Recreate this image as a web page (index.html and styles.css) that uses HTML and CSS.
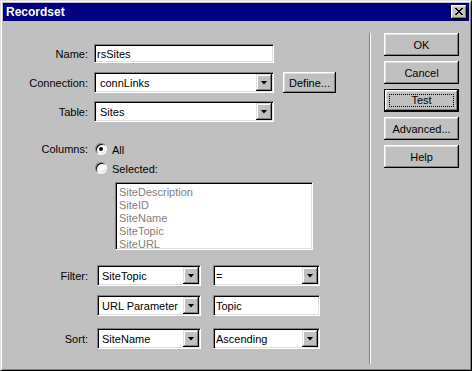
FILE: index.html
```html
<!DOCTYPE html>
<html lang="en">
<head>
    <meta charset="UTF-8">
    <title>Recordset</title>
    <link rel="stylesheet" href="styles.css">
</head>
<body>

    <div class="window">
        <div class="titlebar">
            <span class="title">Recordset</span>
            <button class="close-btn" type="button">
                <svg width="8" height="7" viewBox="0 0 8 7" shape-rendering="crispEdges">
                    <path d="M0 0h2v1h-2zM6 0h2v1h-2zM1 1h2v1h-2zM5 1h2v1h-2zM2 2h4v1h-4zM3 3h2v1h-2zM2 4h4v1h-4zM1 5h2v1h-2zM5 5h2v1h-2zM0 6h2v1h-2zM6 6h2v1h-2z" fill="#000"/>
                </svg>
            </button>
        </div>

        <div class="dialog">
            <div class="form-panel">
                <div class="row row-name">
                    <label class="field-label" for="rsName">Name:</label>
                    <input class="text-field name-field" id="rsName" type="text" value="rsSites">
                </div>

                <div class="row row-conn">
                    <span class="field-label">Connection:</span>
                    <div class="combo combo-wide"><span class="combo-value">connLinks</span><span class="combo-arrow"><i></i></span></div>
                    <button class="btn define-btn" type="button">Define...</button>
                </div>

                <div class="row row-table">
                    <span class="field-label">Table:</span>
                    <div class="combo combo-wide"><span class="combo-value">Sites</span><span class="combo-arrow"><i></i></span></div>
                </div>

                <div class="row row-radio-all">
                    <span class="field-label">Columns:</span>
                    <span class="radio checked"></span>
                    <span class="radio-text">All</span>
                </div>

                <div class="row row-radio-sel">
                    <span class="field-label"></span>
                    <span class="radio"></span>
                    <span class="radio-text">Selected:</span>
                </div>

                <div class="row row-list">
                    <span class="field-label"></span>
                    <div class="listbox">
                        <div class="list-item">SiteDescription</div>
                        <div class="list-item">SiteID</div>
                        <div class="list-item">SiteName</div>
                        <div class="list-item">SiteTopic</div>
                        <div class="list-item">SiteURL</div>
                    </div>
                </div>

                <div class="row row-filter">
                    <span class="field-label">Filter:</span>
                    <div class="combo combo-left"><span class="combo-value">SiteTopic</span><span class="combo-arrow"><i></i></span></div>
                    <div class="combo combo-right"><span class="combo-value">=</span><span class="combo-arrow"><i></i></span></div>
                </div>

                <div class="row row-param">
                    <span class="field-label"></span>
                    <div class="combo combo-left"><span class="combo-value">URL Parameter</span><span class="combo-arrow"><i></i></span></div>
                    <input class="text-field topic-field" type="text" value="Topic">
                </div>

                <div class="row row-sort">
                    <span class="field-label">Sort:</span>
                    <div class="combo combo-left"><span class="combo-value">SiteName</span><span class="combo-arrow"><i></i></span></div>
                    <div class="combo combo-right"><span class="combo-value">Ascending</span><span class="combo-arrow"><i></i></span></div>
                </div>
            </div>

            <div class="separator"></div>

            <div class="button-panel">
                <button class="btn side-btn" type="button">OK</button>
                <button class="btn side-btn" type="button">Cancel</button>
                <button class="btn side-btn default-btn" type="button"><span class="focus-rect">Test</span></button>
                <button class="btn side-btn" type="button">Advanced...</button>
                <button class="btn side-btn" type="button">Help</button>
            </div>
        </div>
    </div>

</body>
</html>
```

FILE: styles.css
```css
body {
    margin: 0;
    font-family: "Liberation Sans", Arial, sans-serif;
    font-size: 11px;
    color: #000;
    background-color: #c0c0c0;
}
.window {
    width: 472px;
    height: 371px;
    box-sizing: border-box;
    border: 1px solid;
    border-color: #dfdfdf #000 #000 #dfdfdf;
    padding: 2px;
    background-color: #c0c0c0;
    box-shadow: inset 1px 1px #fff, inset -1px -1px #808080;
    display: flex;
    flex-direction: column;
}
.titlebar {
    height: 18px;
    background-color: #000080;
    display: flex;
    align-items: center;
    justify-content: space-between;
    padding: 0 2px 0 3px;
}
.title {
    color: #fff;
    font-weight: bold;
    font-size: 12px;
}
.close-btn {
    width: 16px;
    height: 14px;
    padding: 0;
    border: none;
    background-color: #c0c0c0;
    box-shadow: inset -1px -1px #000, inset 1px 1px #fff, inset -2px -2px #808080, inset 2px 2px #dfdfdf;
    display: flex;
    align-items: center;
    justify-content: center;
}
.close-btn svg {
    display: block;
    margin: 0 0 1px 0;
}
.dialog {
    flex: 1;
    display: flex;
}
.form-panel {
    width: 366px;
    padding-top: 23px;
    display: flex;
    flex-direction: column;
}
.row {
    display: flex;
    align-items: center;
}
.field-label {
    width: 85px;
    margin-right: 6px;
    text-align: right;
    flex-shrink: 0;
}
.row-conn, .row-table { margin-top: 9px; height: 21px; }
.row-table { margin-top: 8px; }
.row-radio-all { margin-top: 20px; height: 13px; }
.row-radio-sel { margin-top: 6px; height: 13px; }
.row-list { margin-top: 8px; }
.row-filter { margin-top: 15px; }
.row-param { margin-top: 9px; }
.row-sort { margin-top: 12px; }
.row-filter .field-label,
.row-param .field-label,
.row-sort .field-label {
    margin-right: 9px;
}

/* sunken fields */
.text-field, .combo, .listbox {
    box-sizing: border-box;
    border: 1px solid;
    border-color: #808080 #fff #fff #808080;
    box-shadow: inset 1px 1px #000, inset -1px -1px #dfdfdf;
    background-color: #fff;
}
.text-field {
    font-family: inherit;
    font-size: 11px;
    color: #000;
    outline: none;
    margin: 0;
    padding: 0 0 0 2px;
}
.name-field {
    width: 180px;
    height: 19px;
}
.topic-field {
    width: 107px;
    height: 21px;
    margin-left: 12px;
}
.combo {
    height: 21px;
    padding: 1px;
    display: flex;
    align-items: stretch;
}
.combo-value {
    flex: 1;
    display: flex;
    align-items: center;
    padding-left: 3px;
    white-space: nowrap;
    overflow: hidden;
}
.combo-arrow {
    width: 16px;
    background-color: #c0c0c0;
    box-shadow: inset -1px -1px #000, inset 1px 1px #dfdfdf, inset -2px -2px #808080, inset 2px 2px #fff;
    display: flex;
    align-items: center;
    justify-content: center;
}
.combo-arrow i {
    width: 7px;
    height: 4px;
    background-color: #000;
    clip-path: polygon(0 0, 100% 0, 50% 100%);
}
.combo-wide { width: 180px; }
.combo-wide .combo-value { padding-left: 4px; }
.combo-left { width: 104px; }
.combo-right { width: 107px; margin-left: 12px; }
.combo-right .combo-value { padding-left: 1px; }

/* radios */
.radio {
    width: 12px;
    height: 12px;
    box-sizing: border-box;
    margin-left: 1px;
    border-radius: 50%;
    border: 1px solid;
    border-color: #808080 #fff #fff #808080;
    box-shadow: inset 1px 1px #000, inset -1px -1px #dfdfdf;
    background-color: #fff;
    display: flex;
    align-items: center;
    justify-content: center;
}
.radio.checked::after {
    content: "";
    width: 4px;
    height: 4px;
    border-radius: 50%;
    background-color: #000;
}
.radio-text {
    margin-left: 5px;
    padding-top: 3px;
}

/* listbox */
.listbox {
    margin-left: 21px;
    width: 198px;
    height: 68px;
    padding: 3px 0 0 3px;
    color: #808080;
}
.list-item {
    height: 13px;
    line-height: 13px;
}

/* separator */
.separator {
    width: 0;
    border-left: 1px solid #808080;
    border-right: 1px solid #fff;
    margin: 12px 0 4px 0;
}

/* buttons */
.btn {
    font-family: inherit;
    font-size: 11px;
    color: #000;
    background-color: #c0c0c0;
    border: none;
    padding: 0;
    box-shadow: inset -1px -1px #000, inset 1px 1px #fff, inset -2px -2px #808080, inset 2px 2px #dfdfdf;
}
.define-btn {
    width: 53px;
    height: 21px;
    margin-left: 9px;
}
.button-panel {
    padding: 12px 0 0 13px;
    display: flex;
    flex-direction: column;
    gap: 5px;
}
.side-btn {
    width: 75px;
    height: 23px;
}
.default-btn {
    border: 1px solid #000;
    display: flex;
    align-items: center;
    justify-content: center;
}
.focus-rect {
    box-sizing: border-box;
    width: 65px;
    height: 13px;
    line-height: 11px;
    border: 1px dotted #000;
    text-align: center;
}
```
